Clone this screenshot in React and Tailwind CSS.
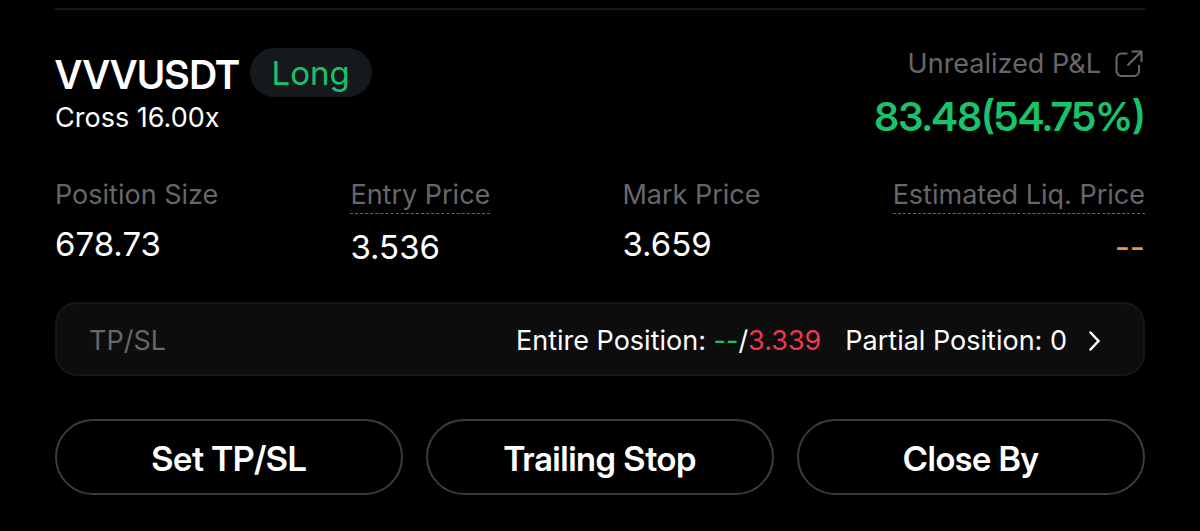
function ShareIcon() {
  return (
    <svg viewBox="0 0 28 28" className="h-7 w-7" fill="none" stroke="currentColor" strokeWidth="2" aria-hidden="true">
      <path d="M12.5 3.5H6.5a5 5 0 0 0-5 5V21a5 5 0 0 0 5 5H19a5 5 0 0 0 5-5v-6" />
      <path d="M12.5 15.5L26 2M16.5 1.5h10V12" />
    </svg>
  );
}

function Metric({ label, value, hint = false, end = false, tone = "text-white" }) {
  return (
    <div className={end ? "flex flex-col items-end gap-[13px]" : "flex flex-col items-start gap-[13px]"}>
      <dt
        className={
          hint
            ? "border-b border-dashed border-[#67676b] pb-0.5 text-[27px] leading-8 text-[#67676b]"
            : "text-[27px] leading-8 text-[#67676b]"
        }
      >
        {label}
      </dt>
      <dd className={`text-[33px] leading-10 ${tone}`}>{value}</dd>
    </div>
  );
}

function ActionButton({ children }) {
  return (
    <button
      type="button"
      className="flex-1 rounded-full border-2 border-[#3b3b3d] pt-4 pb-3 font-['Inter_Display','Inter',sans-serif] text-[34px] leading-[44px] font-semibold text-white"
    >
      {children}
    </button>
  );
}

export default function App() {
  return (
    <main className="min-h-screen bg-black px-[55px] pt-2 pb-8 font-['Inter','Liberation_Sans',sans-serif] text-white">
      <section className="border-t-2 border-[#181818] pt-[38px]">
        <header className="flex items-start justify-between">
          <div>
            <div className="flex items-start gap-2.5">
              <h1 className="pt-0.5 font-['Inter_Display','Inter',sans-serif] text-[39px] leading-[50px] font-semibold">VVVUSDT</h1>
              <span className="rounded-full bg-[#15191c] px-[22px] pt-px text-[33px] leading-[48px] text-[#19c26b]">Long</span>
            </div>
            <p className="mt-0.5 text-[27px] leading-8">Cross 16.00x</p>
          </div>
          <div className="flex flex-col items-end gap-3">
            <a href="#share" className="flex items-center gap-3.5 pr-0.5 text-[27px] leading-8 text-[#67676b]">
              Unrealized P&amp;L
              <ShareIcon />
            </a>
            <p className="font-['Inter_Display','Inter',sans-serif] text-[40px] leading-[50px] font-semibold text-[#19c26b]">83.48(54.75%)</p>
          </div>
        </header>

        <dl className="mt-[37px] flex justify-between">
          <Metric label="Position Size" value="678.73" />
          <Metric label="Entry Price" value="3.536" hint />
          <Metric label="Mark Price" value="3.659" />
          <Metric label="Estimated Liq. Price" value="--" hint end tone="text-[#f0963c]" />
        </dl>

        <button
          type="button"
          className="mt-[35px] flex w-full items-center justify-between rounded-[22px] border-2 border-[#171717] bg-[#0d0d0d] pt-[19px] pb-[15px] pr-10 pl-8 text-[27px] leading-9"
        >
          <span className="text-[#67676b]">TP/SL</span>
          <span className="flex items-center">
            <span>
              Entire Position: <span className="text-[#19c26b]">--</span>/<span className="text-[#ee3a50]">3.339</span>
            </span>
            <span className="ml-6">Partial Position: 0</span>
            <svg viewBox="0 0 16 24" className="ml-5 h-6 w-4" fill="none" stroke="currentColor" strokeWidth="2.5" strokeLinecap="round" aria-hidden="true">
              <path d="M3.5 3.5l8 8.5-8 8.5" />
            </svg>
          </span>
        </button>

        <div className="mt-[43px] flex gap-[23px]">
          <ActionButton>Set TP/SL</ActionButton>
          <ActionButton>Trailing Stop</ActionButton>
          <ActionButton>Close By</ActionButton>
        </div>
      </section>
    </main>
  );
}
